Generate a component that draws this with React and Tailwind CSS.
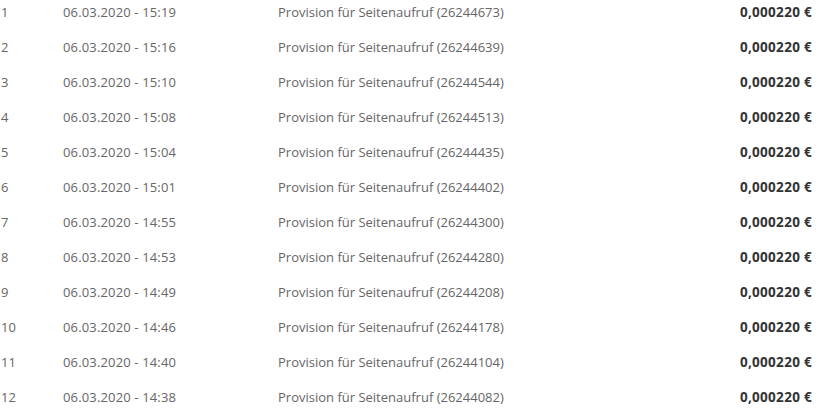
const rows = [
    ["1", "06.03.2020 - 15:19", "26244673"],
    ["2", "06.03.2020 - 15:16", "26244639"],
    ["3", "06.03.2020 - 15:10", "26244544"],
    ["4", "06.03.2020 - 15:08", "26244513"],
    ["5", "06.03.2020 - 15:04", "26244435"],
    ["6", "06.03.2020 - 15:01", "26244402"],
    ["7", "06.03.2020 - 14:55", "26244300"],
    ["8", "06.03.2020 - 14:53", "26244280"],
    ["9", "06.03.2020 - 14:49", "26244208"],
    ["10", "06.03.2020 - 14:46", "26244178"],
    ["11", "06.03.2020 - 14:40", "26244104"],
    ["12", "06.03.2020 - 14:38", "26244082"],
];

const App = () => {
    return (
        <div className="w-[820px] h-[410px] overflow-hidden bg-white font-['Open_Sans',sans-serif] text-[13px] text-[#666]">
            <table className="w-full -mt-[5px] border-collapse">
                <tbody>
                    {rows.map(([nr, date, id]) => (
                        <tr key={nr} className="h-[35px]">
                            <td className="w-[63px] pl-[1px]">{nr}</td>
                            <td className="w-[215px] tracking-[0.15px]">{date}</td>
                            <td>Provision für Seitenaufruf ({id})</td>
                            <td className="text-right pr-[8px] font-bold text-[#333] text-[13.5px] tracking-[0.3px]">0,000220 €</td>
                        </tr>
                    ))}
                </tbody>
            </table>
        </div>
    );
};

export default App;
